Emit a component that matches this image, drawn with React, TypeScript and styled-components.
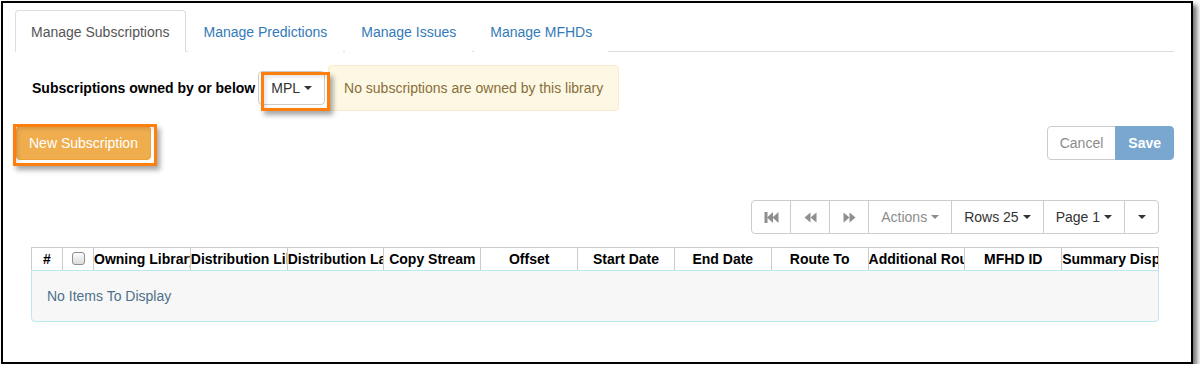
import * as React from 'react'
import styled, { createGlobalStyle } from 'styled-components'

const GlobalStyle = createGlobalStyle`
  html, body {
    margin: 0;
    padding: 0;
    background: #fff;
  }
  body {
    font-family: 'Liberation Sans', Arial, sans-serif;
    font-size: 14px;
    line-height: 20px;
    color: #333;
  }
  * { box-sizing: border-box; }
`

const Frame = styled.div`
  margin: 1px 0 0 1px;
  width: 1192px;
  height: 363px;
  border: 2px solid #000;
  box-shadow: 4px 4px 5px rgba(0, 0, 0, 0.55);
  padding: 7px 17px 0 12px;
  background: #fff;
`

const TabList = styled.ul`
  display: flex;
  list-style: none;
  margin: 0;
  padding: 0;
  border-bottom: 1px solid #ddd;
`

const Tab = styled.li<{ $active?: boolean }>`
  margin-bottom: -1px;
  margin-right: 2px;
  padding: 11px 15px 9px;
  line-height: 20px;
  border: 1px solid ${p => (p.$active ? '#ddd' : 'transparent')};
  border-bottom-color: ${p => (p.$active ? '#fff' : 'transparent')};
  border-radius: 4px 4px 0 0;
  background: #fff;
  color: ${p => (p.$active ? '#555' : '#337ab7')};
`

const OwnerRow = styled.div`
  display: flex;
  align-items: center;
  margin-top: 13px;
  padding-left: 17px;
`

const OwnerLabel = styled.span`
  font-weight: bold;
  color: #000;
  margin-right: 3px;
`

const Highlighted = styled.span`
  position: relative;
  display: inline-flex;
`

const Marker = styled.span<{ $l: number; $t: number; $w: number; $h: number }>`
  position: absolute;
  left: ${p => p.$l}px;
  top: ${p => p.$t}px;
  width: ${p => p.$w}px;
  height: ${p => p.$h}px;
  border: 3px solid #ff7f0e;
  box-shadow: 3px 4px 5px rgba(0, 0, 0, 0.35), inset 2px 2px 4px rgba(0, 0, 0, 0.12);
  pointer-events: none;
`

const Button = styled.button<{ $variant?: 'default' | 'warning' | 'primary'; $muted?: boolean }>`
  display: inline-flex;
  align-items: center;
  justify-content: center;
  height: 34px;
  padding: 6px 12px;
  font-family: inherit;
  font-size: 14px;
  line-height: 20px;
  border: 1px solid #ccc;
  border-radius: 4px;
  background: #fff;
  color: ${p => (p.$muted ? '#8c8c8c' : '#333')};
  ${p => p.$variant === 'warning' && `
    background: #f0ad4e;
    border-color: #eea236;
    color: #fff;
  `}
  ${p => p.$variant === 'primary' && `
    background: #7aa7d0;
    border-color: #7aa7d0;
    color: #fff;
    font-weight: bold;
  `}
`

const Caret = styled.span`
  display: inline-block;
  width: 0;
  height: 0;
  margin-left: 4px;
  border-top: 4px solid;
  border-left: 4px solid transparent;
  border-right: 4px solid transparent;
`

const Alert = styled.div`
  margin-left: 3px;
  padding: 12px 15px;
  border: 1px solid #faebcc;
  border-radius: 4px;
  background: #fcf8e3;
  color: #8a6d3b;
`

const ActionRow = styled.div`
  display: flex;
  justify-content: space-between;
  align-items: center;
  margin-top: 15px;
  padding-left: 1px;
`

const Group = styled.div`
  display: flex;
  & > button { border-radius: 0; margin-left: -1px; }
  & > button:first-child { border-radius: 4px 0 0 4px; margin-left: 0; }
  & > button:last-child { border-radius: 0 4px 4px 0; }
`

const PagerRow = styled.div`
  display: flex;
  justify-content: flex-end;
  margin-top: 40px;
  margin-right: 15px;
`

const IconButton = styled(Button)`
  width: 40px;
  padding: 0;
  color: #8f8f8f;
`

const CaretButton = styled(Button)`
  width: 35px;
  padding: 0;
  & > span { margin-left: 0; }
`

const Grid = styled.div`
  margin: 13px 15px 0 16px;
`

const HeaderRow = styled.div`
  display: grid;
  grid-template-columns: 31px 31px repeat(11, 1fr);
  border-top: 1px solid #ccc;
  border-left: 1px solid #ccc;
`

const HeaderCell = styled.div`
  height: 22px;
  padding: 1px 0;
  border-right: 1px solid #ccc;
  font-weight: bold;
  color: #000;
  text-align: center;
  white-space: nowrap;
  overflow: hidden;
`

const CheckBox = styled.span`
  display: inline-block;
  width: 13px;
  height: 13px;
  margin-top: 3px;
  border: 1px solid #8f8f8f;
  border-radius: 3px;
  background: linear-gradient(#fcfcfc, #dcdcdc);
`

const EmptyBody = styled.div`
  padding: 15px;
  border: 1px solid #bce8f1;
  border-radius: 0 0 4px 4px;
  background: #f7f7f7;
  color: #4d7189;
`

const FirstIcon = () => (
  <svg width="15" height="13" viewBox="0 0 15 13" fill="currentColor">
    <rect x="0.5" y="1" width="3" height="11" />
    <polygon points="3,6.5 9,1 9,12" />
    <polygon points="8.5,6.5 14.5,1 14.5,12" />
  </svg>
)

const PrevIcon = () => (
  <svg width="13" height="13" viewBox="0 0 13 13" fill="currentColor">
    <polygon points="0.5,6.5 6.5,1.5 6.5,11.5" />
    <polygon points="6.5,6.5 12.5,1.5 12.5,11.5" />
  </svg>
)

const NextIcon = () => (
  <svg width="13" height="13" viewBox="0 0 13 13" fill="currentColor">
    <polygon points="0.5,1.5 6.5,6.5 0.5,11.5" />
    <polygon points="6.5,1.5 12.5,6.5 6.5,11.5" />
  </svg>
)

const tabs = ['Manage Subscriptions', 'Manage Predictions', 'Manage Issues', 'Manage MFHDs']
const columns = [
  'Owning Library', 'Distribution Library', 'Distribution Label', 'Copy Stream', 'Offset',
  'Start Date', 'End Date', 'Route To', 'Additional Routing', 'MFHD ID', 'Summary Display',
]

export default function App() {
  return (
    <>
      <GlobalStyle />
      <Frame>
        <TabList>
          {tabs.map((t, i) => <Tab key={t} $active={i === 0}>{t}</Tab>)}
        </TabList>

        <OwnerRow>
          <OwnerLabel>Subscriptions owned by or below</OwnerLabel>
          <Highlighted>
            <Button>MPL<Caret /></Button>
            <Marker $l={3} $t={1} $w={69} $h={39} />
          </Highlighted>
          <Alert>No subscriptions are owned by this library</Alert>
        </OwnerRow>

        <ActionRow>
          <Highlighted>
            <Button $variant="warning">New Subscription</Button>
            <Marker $l={-3} $t={-2} $w={144} $h={42} />
          </Highlighted>
          <Group>
            <Button $muted>Cancel</Button>
            <Button $variant="primary">Save</Button>
          </Group>
        </ActionRow>

        <PagerRow>
          <Group>
            <IconButton><FirstIcon /></IconButton>
            <IconButton><PrevIcon /></IconButton>
            <IconButton><NextIcon /></IconButton>
            <Button $muted>Actions<Caret /></Button>
            <Button>Rows 25<Caret /></Button>
            <Button>Page 1<Caret /></Button>
            <CaretButton><Caret /></CaretButton>
          </Group>
        </PagerRow>

        <Grid>
          <HeaderRow>
            <HeaderCell>#</HeaderCell>
            <HeaderCell><CheckBox /></HeaderCell>
            {columns.map(c => <HeaderCell key={c}>{c}</HeaderCell>)}
          </HeaderRow>
          <EmptyBody>No Items To Display</EmptyBody>
        </Grid>
      </Frame>
    </>
  )
}
